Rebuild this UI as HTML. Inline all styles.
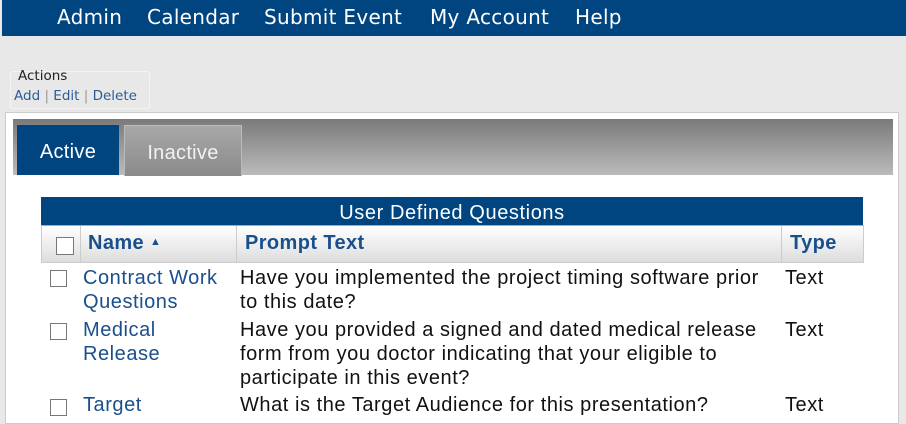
<!DOCTYPE html>
<html><head><style>
body{margin:0;width:906px;height:414px;background:#e8e8e8;font-family:"Liberation Sans",Arial,sans-serif;position:relative;overflow:hidden}
.nav{position:absolute;left:2px;top:0;width:904px;height:36px;background:#00457f;color:#fff;font-family:"DejaVu Sans",sans-serif;font-size:20px;letter-spacing:0.3px}
.nav span{position:absolute;top:5px}
.act{position:absolute;left:10px;top:71px;width:138px;height:36px;border:1px solid #f4f4f4;border-radius:3px;font-family:"DejaVu Sans",sans-serif;font-size:13.5px}
.act .t{position:absolute;left:7px;top:-4px;color:#222}
.act .l{position:absolute;left:3px;top:16px;color:#2a5d97;white-space:nowrap}
.act .l i{font-style:normal;color:#999}
.panel{position:absolute;left:5px;top:112px;width:892px;height:310px;background:#fff;border:1px solid #ccc}
.bar{position:absolute;left:13px;top:119px;width:880px;height:56px;background:linear-gradient(#7a7a7a,#bbb)}
.tab{position:absolute;font-size:20px;color:#fff;text-align:center;letter-spacing:0.3px}
.ta{left:17px;top:125px;width:102px;height:50px;background:#00457f;line-height:54px}
.ti{left:124px;top:125px;width:116px;height:50px;background:linear-gradient(#a8a8a8,#8a8a8a);border:1px solid #bbb;border-bottom:none;line-height:54px;color:#f2f2f2}
.title{position:absolute;left:41px;top:197px;width:822px;height:28px;background:#00457f;color:#fff;font-size:20px;letter-spacing:0.6px;text-align:center;line-height:32px}
.hdr{position:absolute;left:41px;top:225px;width:821px;height:36px;background:linear-gradient(#fff,#ddd);border:1px solid #ccc;border-top:1px solid #aaa}
.hdr b{position:absolute;top:6px;color:#1a4f8c;font-size:20px;letter-spacing:0.4px}
.sep{position:absolute;top:0;width:1px;height:36px;background:#ccc}
.cb{position:absolute;width:15px;height:15px;border:1px solid #777;background:#fff}
.r{position:absolute;font-size:20px;letter-spacing:0.55px;line-height:24px;color:#111;white-space:nowrap}
.n{color:#1a4f8c}
</style></head><body>
<div class="nav"><span style="left:55px">Admin</span><span style="left:145px">Calendar</span><span style="left:262px">Submit Event</span><span style="left:428px">My Account</span><span style="left:573px">Help</span></div>
<div class="act"><span class="t">Actions</span><span class="l">Add <i>|</i> Edit <i>|</i> Delete</span></div>
<div class="panel"></div>
<div class="bar"></div>
<div class="tab ta">Active</div>
<div class="tab ti">Inactive</div>
<div class="title">User Defined Questions</div>
<div class="hdr">
<div class="cb" style="left:14px;top:11px;width:16px;height:16px"></div>
<div class="sep" style="left:38px"></div>
<b style="left:46px">Name <span style="font-size:11px;position:relative;top:-4px">&#9650;</span></b>
<div class="sep" style="left:194px"></div>
<b style="left:203px">Prompt Text</b>
<div class="sep" style="left:739px"></div>
<b style="left:748px">Type</b>
</div>
<div class="cb" style="left:50px;top:270px"></div>
<div class="r n" style="left:83px;top:266px">Contract Work<br>Questions</div>
<div class="r" style="left:240px;top:266px">Have you implemented the project timing software prior<br>to this date?</div>
<div class="r" style="left:785px;top:266px">Text</div>
<div class="cb" style="left:50px;top:323px"></div>
<div class="r n" style="left:83px;top:318px">Medical<br>Release</div>
<div class="r" style="left:240px;top:318px">Have you provided a signed and dated medical release<br>form from you doctor indicating that your eligible to<br>participate in this event?</div>
<div class="r" style="left:785px;top:318px">Text</div>
<div class="cb" style="left:50px;top:399px"></div>
<div class="r n" style="left:83px;top:393px">Target</div>
<div class="r" style="left:240px;top:393px">What is the Target Audience for this presentation?</div>
<div class="r" style="left:785px;top:393px">Text</div>
</body></html>
